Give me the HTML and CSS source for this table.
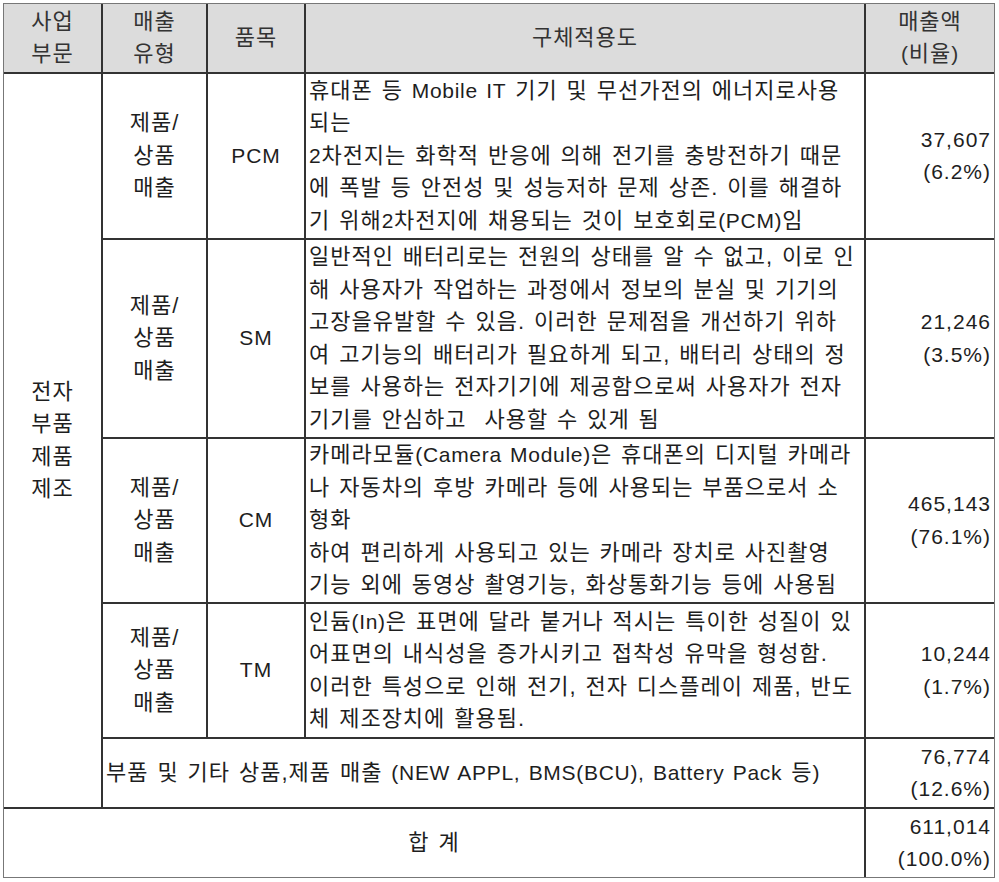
FILE: index.html
```html
<!DOCTYPE html>
<html lang="ko">
<head>
<meta charset="utf-8">
<title>사업부문별 매출</title>
<link rel="stylesheet" href="styles.css">
</head>
<body>
<table class="sales">
  <colgroup>
    <col class="c-div">
    <col class="c-type">
    <col class="c-item">
    <col class="c-desc">
    <col class="c-amt">
  </colgroup>
  <thead>
    <tr class="r-head">
      <th>사업<br>부문</th>
      <th>매출<br>유형</th>
      <th>품목</th>
      <th>구체적용도</th>
      <th class="last">매출액<br><span class="en">(</span>비율<span class="en">)</span></th>
    </tr>
  </thead>
  <tbody>
    <tr class="r-1">
      <td class="center" rowspan="5">전자<br>부품<br>제품<br>제조</td>
      <td class="center">제품/<br>상품<br>매출</td>
      <td class="center code">PCM</td>
      <td class="desc">휴대폰 등 <span class="en">Mobile IT</span> 기기 및 무선가전의 에너지로사용<br>되는<br><span class="en">2</span>차전지는 화학적 반응에 의해 전기를 충방전하기 때문<br>에 폭발 등 안전성 및 성능저하 문제 상존. 이를 해결하<br>기 위해<span class="en">2</span>차전지에 채용되는 것이 보호회로<span class="en">(PCM)</span>임</td>
      <td class="num last">37,607<br>(6.2%)</td>
    </tr>
    <tr class="r-2">
      <td class="center">제품/<br>상품<br>매출</td>
      <td class="center code">SM</td>
      <td class="desc">일반적인 배터리로는 전원의 상태를 알 수 없고, 이로 인<br>해 사용자가 작업하는 과정에서 정보의 분실 및 기기의<br>고장을유발할 수 있음. 이러한 문제점을 개선하기 위하<br>여 고기능의 배터리가 필요하게 되고, 배터리 상태의 정<br>보를 사용하는 전자기기에 제공함으로써 사용자가 전자<br>기기를 안심하고&nbsp; 사용할 수 있게 됨</td>
      <td class="num last">21,246<br>(3.5%)</td>
    </tr>
    <tr class="r-3">
      <td class="center">제품/<br>상품<br>매출</td>
      <td class="center code">CM</td>
      <td class="desc">카메라모듈<span class="en">(Camera Module)</span>은 휴대폰의 디지털 카메라<br>나 자동차의 후방 카메라 등에 사용되는 부품으로서 소<br>형화<br>하여 편리하게 사용되고 있는 카메라 장치로 사진촬영<br>기능 외에 동영상 촬영기능, 화상통화기능 등에 사용됨</td>
      <td class="num last">465,143<br>(76.1%)</td>
    </tr>
    <tr class="r-4">
      <td class="center">제품/<br>상품<br>매출</td>
      <td class="center code">TM</td>
      <td class="desc">인듐<span class="en">(In)</span>은 표면에 달라 붙거나 적시는 특이한 성질이 있<br>어표면의 내식성을 증가시키고 접착성 유막을 형성함.<br>이러한 특성으로 인해 전기, 전자 디스플레이 제품, 반도<br>체 제조장치에 활용됨.</td>
      <td class="num last">10,244<br>(1.7%)</td>
    </tr>
    <tr class="r-5">
      <td class="desc" colspan="3">부품 및 기타 상품,제품 매출 <span class="en">(NEW APPL, BMS(BCU), Battery Pack</span> 등<span class="en">)</span></td>
      <td class="num last">76,774<br>(12.6%)</td>
    </tr>
    <tr class="r-6">
      <td class="center bottom" colspan="4">합 계</td>
      <td class="num last bottom">611,014<br>(100.0%)</td>
    </tr>
  </tbody>
</table>
</body>
</html>
```

FILE: styles.css
```css
html, body {
  background: #ffffff;
}

body {
  margin: 3px;
}

.sales {
  width: 992px;
  table-layout: fixed;
  border-collapse: separate;
  border-spacing: 0;
  border: 1px solid #777777;
  font-family: "Liberation Sans", "Noto Sans CJK KR", sans-serif;
  font-size: 22px;
  letter-spacing: 1px;
  word-spacing: 1.8px;
  line-height: 32.5px;
  color: #1e1e1e;
}

.c-div { width: 99px; }
.c-type { width: 105px; }
.c-item { width: 98px; }
.c-desc { width: 560px; }
.c-amt { width: 128px; }

.sales th,
.sales td {
  padding: 0 3px;
  border-right: 2px solid #333333;
  border-bottom: 2px solid #333333;
  vertical-align: middle;
  white-space: nowrap;
}

.sales th {
  background: #dcdcdc;
  font-weight: normal;
  color: #333333;
  text-align: center;
}

.sales .last {
  border-right: none;
}

.sales .bottom {
  border-bottom: none;
}

.center {
  text-align: center;
}

.desc {
  text-align: left;
}

.sales .num {
  text-align: right;
  font-size: 21px;
}

.sales .code {
  font-size: 21px;
}

.en {
  font-size: 21px;
  letter-spacing: 0.7px;
}

.r-head { height: 70px; }
.r-1 { height: 166px; }
.r-2 { height: 199px; }
.r-3 { height: 165px; }
.r-4 { height: 135px; }
.r-5 { height: 70px; }
.r-6 { height: 68px; }
```
